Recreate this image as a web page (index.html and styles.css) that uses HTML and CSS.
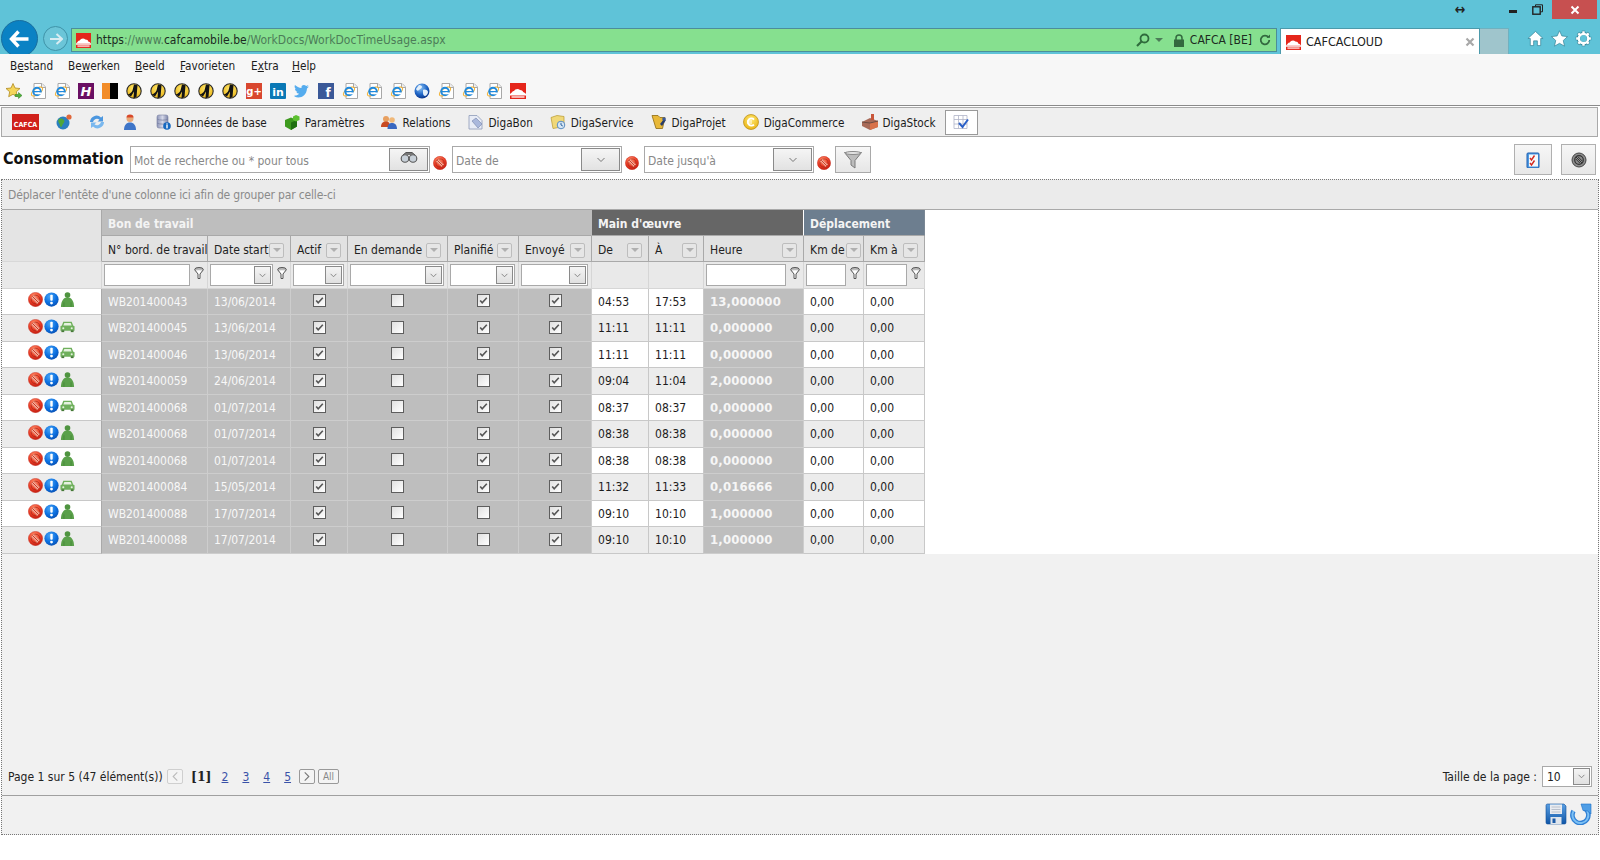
FILE: index.html
```html
<!DOCTYPE html>
<html lang="fr">
<head>
<meta charset="utf-8">
<title>CAFCACLOUD</title>
<link rel="stylesheet" href="styles.css">
</head>
<body>
<svg class="defs" width="0" height="0" aria-hidden="true">
  <defs>
    <radialGradient id="gRed" cx="40%" cy="25%" r="80%"><stop offset="0" stop-color="#ff8a66"/><stop offset=".55" stop-color="#ea3d26"/><stop offset="1" stop-color="#c01c10"/></radialGradient>
    <radialGradient id="gBlue" cx="40%" cy="30%" r="75%"><stop offset="0" stop-color="#4aa6f5"/><stop offset=".6" stop-color="#0b6fe0"/><stop offset="1" stop-color="#0a4fb0"/></radialGradient>
    <radialGradient id="gYel" cx="50%" cy="35%" r="70%"><stop offset="0" stop-color="#ffe970"/><stop offset="1" stop-color="#e8b010"/></radialGradient>
    <radialGradient id="gGlobe" cx="40%" cy="30%" r="75%"><stop offset="0" stop-color="#8cc4f5"/><stop offset=".6" stop-color="#1c62c4"/><stop offset="1" stop-color="#0b2f80"/></radialGradient>
    <linearGradient id="gDisk" x1="0" y1="0" x2="0" y2="1"><stop offset="0" stop-color="#5a9fe2"/><stop offset="1" stop-color="#0f56a8"/></linearGradient>
    <linearGradient id="gDb" x1="0" y1="0" x2="1" y2="0"><stop offset="0" stop-color="#8d95b8"/><stop offset=".5" stop-color="#d5d8e8"/><stop offset="1" stop-color="#7c84a8"/></linearGradient>
    <symbol id="stop" viewBox="0 0 16 16"><circle cx="8" cy="8" r="7.600" fill="url(#gRed)" stroke="#c62a1c" stroke-width=".5"/><circle cx="8" cy="8" r="4.600" fill="none" stroke="#a8281a" stroke-width=".8"/><path d="M4.800 4.800l6.400 6.400" stroke="#f6ad98" stroke-width="4.200"/><path d="M4.800 4.800l6.400 6.400" stroke="#c4301e" stroke-width="1"/><path d="M6.300 3.800l5.900 5.900M3.800 6.300l5.900 5.900" stroke="#d8503c" stroke-width=".6"/></symbol>
    <symbol id="info" viewBox="0 0 16 16"><circle cx="8" cy="8" r="7.600" fill="url(#gBlue)"/><rect x="6.700" y="2.800" width="2.600" height="6.400" rx="1" fill="#fff"/><circle cx="8" cy="11.800" r="1.500" fill="#fff"/></symbol>
    <symbol id="person" viewBox="0 0 16 16"><circle cx="8" cy="3.300" r="3" fill="#4f9440"/><path d="M5.500 6h5c2.500 1 4.500 5 4.500 10H1C1 11 3 7 5.500 6z" fill="#5aa04a"/><path d="M4.200 11v5M11.800 11v5" stroke="#3f7e32" stroke-width=".7"/></symbol>
    <symbol id="car" viewBox="0 0 16 16"><path d="M3.500 3h9l1.500 4 1.500 .8v4.700h-15V7.800L2 7z" fill="#6fb05c"/><path d="M4.600 4.300h6.800l1 2.700H3.600z" fill="#e6f2e0"/><rect x="1.500" y="12" width="3" height="2" fill="#467a38"/><rect x="11.500" y="12" width="3" height="2" fill="#467a38"/><circle cx="3.500" cy="9.800" r="1.100" fill="#e6f2e0"/><circle cx="12.500" cy="9.800" r="1.100" fill="#e6f2e0"/></symbol>
    <symbol id="tick" viewBox="0 0 11 11"><path d="M2.200 5.500l2 2.300L8.800 2.800" fill="none" stroke="#555" stroke-width="1.600"/></symbol>
    <symbol id="funnel" viewBox="0 0 10 12"><ellipse cx="5" cy="2.500" rx="4.300" ry="2" fill="#bbb" stroke="#555"/><path d="M1 3.200L4 7v4.500h2V7l3-3.800" fill="#fff" stroke="#555"/></symbol>
    <symbol id="chev" viewBox="0 0 10 6"><path d="M1.500 1l3.500 3.500L8.500 1" fill="none" stroke="#777" stroke-width="1"/></symbol>
    <symbol id="favi" viewBox="0 0 16 16"><rect width="16" height="16" fill="#e5261b"/><path d="M0 11c2-1 2-3 4-3 1-2 4-3 6-1 2 0 3 1 3 2 1 0 2 1 3 2z" fill="#fff"/><rect y="11" width="16" height="1.500" fill="#fff"/><path d="M1.500 13h13v2h-13z" fill="#f7b5b0"/></symbol>
    <symbol id="iedoc" viewBox="0 0 16 16"><path d="M4 .5h8l3.500 3.500v11.500H4z" fill="#fff" stroke="#a8a8a8"/><path d="M11.500 .5v4h4" fill="#eee" stroke="#a8a8a8"/><ellipse cx="7" cy="8.500" rx="6.500" ry="3" fill="none" stroke="#f2b233" stroke-width="1.100" transform="rotate(-35 7 8.500)"/><circle cx="7" cy="8.500" r="3.800" fill="none" stroke="#1f8ae0" stroke-width="1.900"/><rect x="4" y="8" width="6" height="1.300" fill="#1f8ae0"/><rect x="7.400" y="9.500" width="4.300" height="1.800" fill="#fff"/></symbol>
    <symbol id="yel" viewBox="0 0 16 16"><circle cx="8" cy="8" r="7.200" fill="url(#gYel)" stroke="#2a2a2a" stroke-width="1.100"/><path d="M1.500 11.500C4 11 5.500 9.500 6.500 7.500L8 1.500l3.500 .8L10.500 14l-3 1.500 .5-7-3 5z" fill="#141414"/></symbol>
    <symbol id="globe" viewBox="0 0 16 16"><circle cx="8" cy="8" r="7.500" fill="url(#gGlobe)"/><path d="M5 2c2 0 3 1 3 2S6 6 5 7 3 8 2 6zM9 7c2-1 5 0 5 2s-2 4-3 4-2-1-2-3z" fill="#e4f0fb"/></symbol>
    <symbol id="home" viewBox="0 0 18 18"><path d="M9 1.500L17 9h-2.500v7.500H11v-5H7v5H3.500V9H1z" fill="#fff" stroke="#2f7e92" stroke-width=".7"/></symbol>
    <symbol id="star" viewBox="0 0 18 18"><path d="M9 .8l2.500 5.500 6 .7-4.500 4.100 1.300 6L9 14.100l-5.300 3 1.300-6L.5 7l6-.7z" fill="#fff" stroke="#2f7e92" stroke-width=".7"/></symbol>
    <symbol id="gear" viewBox="0 0 18 18"><path d="M9 3.800v-3M9 14.200v3M3.800 9h-3M14.200 9h3M5.300 5.300L3.200 3.200M12.700 12.700l2.100 2.100M5.300 12.700l-2.100 2.100M12.700 5.300l2.100-2.100" stroke="#2f7e92" stroke-width="3.600"/><circle cx="9" cy="9" r="5.300" fill="none" stroke="#2f7e92" stroke-width="3.400"/><path d="M9 3.800v-2.600M9 14.200v2.600M3.800 9H1.200M14.200 9h2.600M5.300 5.300L3.500 3.500M12.700 12.700l1.800 1.800M5.300 12.700l-1.800 1.800M12.700 5.300l1.800-1.800" stroke="#fff" stroke-width="2.600"/><circle cx="9" cy="9" r="5" fill="none" stroke="#fff" stroke-width="2.400"/></symbol>
  </defs>
</svg>

<header class="chrome">
  <div class="caption">
    <span class="resize">↔</span>
    <span class="winmin"></span>
    <svg class="winmax" viewBox="0 0 11 11"><path d="M3.500 2.500V.8h7v7H8.500" fill="none" stroke="#222"/><rect x=".8" y="2.800" width="7.400" height="7.400" fill="none" stroke="#222" stroke-width="1.400"/></svg>
    <span class="winclose"><svg class="closex" viewBox="0 0 10 10"><path d="M1.500 1.500l7 7M8.500 1.500l-7 7" stroke="#fff" stroke-width="2"/></svg></span>
  </div>
  <div class="navrow">
    <span class="back"><svg class="back-arrow" viewBox="0 0 20 18"><path d="M9 1.500L2 9l7 7.500M2.500 9H19" fill="none" stroke="#fff" stroke-width="3.400"/></svg></span>
    <span class="forward"><svg class="fwd-arrow" viewBox="0 0 14 12"><path d="M7.500 1L13 6l-5.500 5M12.500 6H1" fill="none" stroke="#d8ecf2" stroke-width="2"/></svg></span>
    <div class="address">
      <svg class="fav15"><use href="#favi"/></svg>
      <span class="url">https<span class="dim">://www.</span>cafcamobile.be<span class="dim">/WorkDocs/WorkDocTimeUsage.aspx</span></span>
      <span class="grow"></span>
      <svg class="addr-search" viewBox="0 0 14 14"><circle cx="8.500" cy="5.500" r="4" fill="none" stroke="#2f6b3c" stroke-width="1.800"/><path d="M5.500 8.500L1 13" stroke="#2f6b3c" stroke-width="2.200"/></svg>
      <span class="addr-caret"></span>
      <svg class="addr-lock" viewBox="0 0 12 13"><path d="M3 6V4a3 3 0 0 1 6 0v2" fill="none" stroke="#33693f" stroke-width="1.500"/><rect x="1" y="5.500" width="10" height="7.500" fill="#33693f"/></svg>
      <span class="cert">CAFCA [BE]</span>
      <svg class="addr-reload" viewBox="0 0 12 12"><path d="M9.500 3.500A4.300 4.300 0 1 0 10.300 6" fill="none" stroke="#33693f" stroke-width="1.800"/><path d="M7.500 3.800h3.500V.5z" fill="#33693f"/></svg>
    </div>
    <div class="tab">
      <svg class="fav15"><use href="#favi"/></svg>
      <span class="tab-title">CAFCACLOUD</span>
      <span class="grow"></span>
      <svg class="tab-x" viewBox="0 0 10 10"><path d="M1.500 1.500l7 7M8.500 1.500l-7 7" stroke="#a8a8a8" stroke-width="2.200"/></svg>
    </div>
    <span class="newtab"></span>
    <div class="tools">
      <svg class="tool"><use href="#home"/></svg>
      <svg class="tool"><use href="#star"/></svg>
      <svg class="tool"><use href="#gear"/></svg>
    </div>
  </div>
</header>

<nav class="menus">
  <div class="menubar">
    <span class="m1">B<u>e</u>stand</span>
    <span class="m2">Be<u>w</u>erken</span>
    <span class="m3"><u>B</u>eeld</span>
    <span class="m4"><u>F</u>avorieten</span>
    <span class="m5">E<u>x</u>tra</span>
    <span class="m6"><u>H</u>elp</span>
  </div>
  <div class="favbar">
    <svg class="ic" viewBox="0 0 16 16"><path d="M7 .5l2 4.500 5 .5-3.700 3.300 1 4.900L7 11.300 2.700 13.700l1-4.900L0 5.500l5-.5z" fill="#f5d65a" stroke="#b08a20" stroke-width=".8"/><path d="M9 11.500h3.500V9.500l3.500 3-3.500 3v-2H9z" fill="#4fb03a" stroke="#2d7a22" stroke-width=".5"/></svg>
    <svg class="ic"><use href="#iedoc"/></svg>
    <svg class="ic"><use href="#iedoc"/></svg>
    <svg class="ic" viewBox="0 0 16 16"><rect width="16" height="16" fill="#6a0f63"/><text x="8" y="13" class="ltr-h">H</text></svg>
    <svg class="ic" viewBox="0 0 16 16"><rect width="8" height="16" fill="#f28c28"/><rect x="8" width="8" height="16" fill="#000"/></svg>
    <svg class="ic"><use href="#yel"/></svg>
    <svg class="ic"><use href="#yel"/></svg>
    <svg class="ic"><use href="#yel"/></svg>
    <svg class="ic"><use href="#yel"/></svg>
    <svg class="ic"><use href="#yel"/></svg>
    <svg class="ic" viewBox="0 0 16 16"><rect width="16" height="16" fill="#d9472f"/><text x="8" y="12" class="ltr-g">g+</text></svg>
    <svg class="ic" viewBox="0 0 16 16"><rect width="16" height="16" rx="1" fill="#0a78b5"/><text x="8" y="12.500" class="ltr-in">in</text></svg>
    <svg class="ic" viewBox="0 0 16 16"><path d="M.5 13.500c5 2.500 12 0 12.500-8l2-2-2 .5 1.500-2-2.300 1C9.800 1 7 2.500 7.500 5 5 5 2.500 3.500 1 2c-.8 1.500-.3 3 1 4L1 5.700c0 1.500 1 2.600 2.500 3l-1.200.1c.5 1.200 1.500 2 2.800 2-1.300 1.300-3 2-4.600 1.700z" fill="#55acee"/></svg>
    <svg class="ic" viewBox="0 0 16 16"><rect width="16" height="16" fill="#3b5998"/><text x="10" y="14" class="ltr-f">f</text></svg>
    <svg class="ic"><use href="#iedoc"/></svg>
    <svg class="ic"><use href="#iedoc"/></svg>
    <svg class="ic"><use href="#iedoc"/></svg>
    <svg class="ic"><use href="#globe"/></svg>
    <svg class="ic"><use href="#iedoc"/></svg>
    <svg class="ic"><use href="#iedoc"/></svg>
    <svg class="ic"><use href="#iedoc"/></svg>
    <svg class="ic"><use href="#favi"/></svg>
  </div>
</nav>

<div class="toolbar">
  <span class="logo">CAFCA</span>
  <svg class="ic" viewBox="0 0 16 16"><circle cx="7" cy="9" r="6.500" fill="#2a7fc0"/><path d="M3 5c2-1 4 0 5 1s0 3-1 4-1 3-2 3-1-3-2-4-1-3 0-4z" fill="#4ea63a"/><circle cx="13" cy="3" r="2.600" fill="#e0673a"/></svg>
  <svg class="ic" viewBox="0 0 16 16"><path d="M1 8a6.500 6.500 0 0 1 11-4.500l2-1.500v5.500H8.500l2-1.800A4 4 0 0 0 4 8z" fill="#4c97df"/><path d="M15 8a6.500 6.500 0 0 1-11 4.500L2 14V8.500h5.500l-2 1.800A4 4 0 0 0 12 8z" fill="#7ab8ee"/></svg>
  <svg class="ic" viewBox="0 0 16 16"><circle cx="8" cy="4.500" r="3.500" fill="#e8a878"/><path d="M4.500 3.500a3.500 3 0 0 1 7 0z" fill="#d8482a"/><path d="M2 16c0-5 2.500-7.500 6-7.500s6 2.500 6 7.500z" fill="#3f75c8"/></svg>
  <span class="tb"><svg class="ic" viewBox="0 0 16 16"><rect x="2" y="1" width="11" height="13" rx="2" fill="url(#gDb)" stroke="#767ea0" stroke-width=".6"/><path d="M2 5c2 1.500 9 1.500 11 0M2 9c2 1.500 9 1.500 11 0" fill="none" stroke="#767ea0" stroke-width=".7"/><circle cx="12" cy="12" r="3.800" fill="#1668c0"/><rect x="11.300" y="11" width="1.400" height="3.400" fill="#fff"/><rect x="11.300" y="9.400" width="1.400" height="1.200" fill="#fff"/></svg><span class="tbt">Données de base</span></span>
  <span class="tb"><svg class="ic" viewBox="0 0 16 16"><path d="M1 6l6-2.500 6 2.500v6.500L7 16l-6-3.500z" fill="#3d9a1e"/><path d="M7 8.500V16l6-3.500V6z" fill="#1f6f10"/><path d="M9 2.500L12 1l3.500 1.500v3.500L12 7.500 9 6z" fill="#5cc030"/></svg><span class="tbt">Paramètres</span></span>
  <span class="tb"><svg class="ic" viewBox="0 0 16 16"><circle cx="5" cy="5" r="3" fill="#e8a060"/><path d="M0 13c0-4 2-5.500 5-5.500s4 1.500 4 5.500z" fill="#c84a22"/><circle cx="11" cy="6" r="2.800" fill="#f0b878"/><path d="M6.500 15c0-4.500 2-6 4.500-6s5 1.500 5 6z" fill="#3a68c0"/></svg><span class="tbt">Relations</span></span>
  <span class="tb"><svg class="ic" viewBox="0 0 16 16"><path d="M1 1.500h8l5 5v8.500H1z" fill="#e8ecf6" stroke="#8e9ab8" stroke-width=".8"/><path d="M4 7l4-3 6 6-4 4z" fill="#aab8dc" stroke="#7684aa" stroke-width=".6"/></svg><span class="tbt">DigaBon</span></span>
  <span class="tb"><svg class="ic" viewBox="0 0 16 16"><path d="M1 3.500l6-2 7 1v10l-11 2z" fill="#f0d878" stroke="#b8982c" stroke-width=".7"/><circle cx="11" cy="11" r="3.800" fill="#d6e6f4" stroke="#5a8cc0"/><path d="M11 8.800V11l1.800 1" fill="none" stroke="#2c64a0"/></svg><span class="tbt">DigaService</span></span>
  <span class="tb"><svg class="ic" viewBox="0 0 16 16"><path d="M1 1.500h6l2 2h5l-2.500 11H5z" fill="#e8b838" stroke="#8e6a10" stroke-width=".8"/><path d="M9 10l4-5 2 1-4 6z" fill="#283c68"/><circle cx="13" cy="5" r="1.800" fill="#3a5a9c"/></svg><span class="tbt">DigaProjet</span></span>
  <span class="tb"><svg class="ic" viewBox="0 0 16 16"><circle cx="8" cy="8" r="7.500" fill="url(#gYel)" stroke="#b88a10" stroke-width=".7"/><path d="M11 5.500a3.600 3.600 0 1 0 0 5" fill="none" stroke="#fff" stroke-width="1.800"/><path d="M4 7h5M4 9h5" stroke="#fff"/></svg><span class="tbt">DigaCommerce</span></span>
  <span class="tb"><svg class="ic" viewBox="0 0 16 16"><path d="M0 8l8-4 8 3v6l-8 3-8-4z" fill="#a86a58"/><path d="M8 9v7l8-3V7z" fill="#d8724a"/><path d="M0 8l8 1 8-2" fill="none" stroke="#6a4a40"/><rect x="9" y="0" width="3" height="6" fill="#c8563a"/></svg><span class="tbt">DigaStock</span></span>
  <span class="tb-btn"><svg class="ic" viewBox="0 0 16 16"><path d="M1 1.500h13v13H1zM1 5.500h13M1 10h13M5.500 1.500v13M10 1.500v13" fill="#fff" stroke="#b0b4c8" stroke-width=".8"/><path d="M6 9l3.500 4L15 5.500" fill="none" stroke="#2a60c8" stroke-width="2"/></svg></span>
</div>

<div class="headrow">
  <span class="title">Consommation</span>
  <div class="field f-search">
    <span class="ph">Mot de recherche ou * pour tous</span>
    <span class="fbtn bino"><svg class="bino-ic" viewBox="0 0 18 11"><circle cx="5" cy="6.500" r="3.800" fill="#c8d0d8" stroke="#555" stroke-width="1.100"/><circle cx="13" cy="6.500" r="3.800" fill="#c8d0d8" stroke="#555" stroke-width="1.100"/><path d="M3 3l3-2.500h6L15 3" fill="#777" stroke="#555"/></svg></span>
  </div>
  <svg class="stop-h"><use href="#stop"/></svg>
  <div class="field f-date">
    <span class="ph">Date de</span>
    <span class="fbtn"><svg class="chev-m"><use href="#chev"/></svg></span>
  </div>
  <svg class="stop-h"><use href="#stop"/></svg>
  <div class="field f-date2">
    <span class="ph">Date jusqu'à</span>
    <span class="fbtn"><svg class="chev-m"><use href="#chev"/></svg></span>
  </div>
  <svg class="stop-h"><use href="#stop"/></svg>
  <span class="filterbtn"><svg class="funnel-l" viewBox="0 0 18 18"><path d="M.5 1.500h17L11 9.500V17l-4-3V9.500z" fill="#bcbcbc" stroke="#7a7a7a"/><ellipse cx="9" cy="2" rx="8" ry="1.500" fill="#e4e4e4" stroke="#8a8a8a"/></svg></span>
  <span class="grow"></span>
  <span class="sidebtn sb1"><svg class="ic" viewBox="0 0 16 16"><rect x="2" y="1" width="12" height="15" rx="1" fill="#4f9be2" stroke="#1f5fb0"/><rect x="4" y="2.500" width="9" height="12" fill="#f4f8fc"/><path d="M5 6l1.500 2L9.500 3.500M5 11l1.500 2 3-4.500" fill="none" stroke="#d42a20" stroke-width="1.400"/></svg></span>
  <span class="sidebtn sb2"><svg class="ic" viewBox="0 0 16 16"><circle cx="8" cy="8" r="7" fill="#8c8c8c" stroke="#444"/><circle cx="8" cy="8" r="4.300" fill="none" stroke="#333" stroke-width="1.200"/><path d="M5 5l6 6M6.800 4.600l4.600 4.600M4.600 6.800l4.600 4.600" stroke="#333"/></svg></span>
</div>

<main class="grid">
  <div class="groupbar">Déplacer l'entête d'une colonne ici afin de grouper par celle-ci</div>
  <div class="tablewrap">
    <table class="tbl">
      <colgroup>
        <col class="w1"><col class="w2"><col class="w3"><col class="w4"><col class="w5"><col class="w6"><col class="w7"><col class="w8"><col class="w9"><col class="w10"><col class="w11"><col class="w12">
      </colgroup>
      <thead>
        <tr class="r-group">
          <th rowspan="2" class="corner"></th>
          <th colspan="6" class="g-bon">Bon de travail</th>
          <th colspan="3" class="g-main">Main d'œuvre</th>
          <th colspan="2" class="g-dep">Déplacement</th>
        </tr>
        <tr class="r-head">
          <th class="h nobtn">N° bord. de travail</th>
          <th class="h"><span class="hc"><span>Date start</span><i class="sb"></i></span></th>
          <th class="h"><span class="hc"><span>Actif</span><i class="sb"></i></span></th>
          <th class="h"><span class="hc"><span>En demande</span><i class="sb"></i></span></th>
          <th class="h"><span class="hc"><span>Planifié</span><i class="sb"></i></span></th>
          <th class="h"><span class="hc"><span>Envoyé</span><i class="sb"></i></span></th>
          <th class="h"><span class="hc"><span>De</span><i class="sb"></i></span></th>
          <th class="h"><span class="hc"><span>À</span><i class="sb"></i></span></th>
          <th class="h"><span class="hc"><span>Heure</span><i class="sb"></i></span></th>
          <th class="h"><span class="hc tight"><span>Km de</span><i class="sb"></i></span></th>
          <th class="h"><span class="hc"><span>Km à</span><i class="sb"></i></span></th>
        </tr>
        <tr class="r-filter">
          <td></td>
          <td><span class="fc"><span class="ti"></span><svg class="fn"><use href="#funnel"/></svg></span></td>
          <td><span class="fc"><span class="dd"><b><svg class="chev-s"><use href="#chev"/></svg></b></span><svg class="fn"><use href="#funnel"/></svg></span></td>
          <td><span class="fc"><span class="dd"><b><svg class="chev-s"><use href="#chev"/></svg></b></span></span></td>
          <td><span class="fc"><span class="dd"><b><svg class="chev-s"><use href="#chev"/></svg></b></span></span></td>
          <td><span class="fc"><span class="dd"><b><svg class="chev-s"><use href="#chev"/></svg></b></span></span></td>
          <td><span class="fc"><span class="dd"><b><svg class="chev-s"><use href="#chev"/></svg></b></span></span></td>
          <td></td>
          <td></td>
          <td><span class="fc"><span class="ti"></span><svg class="fn"><use href="#funnel"/></svg></span></td>
          <td><span class="fc"><span class="ti"></span><svg class="fn"><use href="#funnel"/></svg></span></td>
          <td><span class="fc"><span class="ti"></span><svg class="fn"><use href="#funnel"/></svg></span></td>
        </tr>
      </thead>
      <tbody>
        <tr>
          <td class="act"><span class="acts"><svg class="a"><use href="#stop"/></svg><svg class="a"><use href="#info"/></svg><svg class="a"><use href="#person"/></svg></span></td>
          <td class="gr">WB201400043</td><td class="gr">13/06/2014</td>
          <td class="gr ck"><span class="cb"><svg><use href="#tick"/></svg></span></td><td class="gr ck"><span class="cb"></span></td><td class="gr ck"><span class="cb"><svg><use href="#tick"/></svg></span></td><td class="gr ck"><span class="cb"><svg><use href="#tick"/></svg></span></td>
          <td>04:53</td><td>17:53</td><td class="gr hr">13,000000</td><td>0,00</td><td>0,00</td>
        </tr>
        <tr>
          <td class="act"><span class="acts"><svg class="a"><use href="#stop"/></svg><svg class="a"><use href="#info"/></svg><svg class="a"><use href="#car"/></svg></span></td>
          <td class="gr">WB201400045</td><td class="gr">13/06/2014</td>
          <td class="gr ck"><span class="cb"><svg><use href="#tick"/></svg></span></td><td class="gr ck"><span class="cb"></span></td><td class="gr ck"><span class="cb"><svg><use href="#tick"/></svg></span></td><td class="gr ck"><span class="cb"><svg><use href="#tick"/></svg></span></td>
          <td>11:11</td><td>11:11</td><td class="gr hr">0,000000</td><td>0,00</td><td>0,00</td>
        </tr>
        <tr>
          <td class="act"><span class="acts"><svg class="a"><use href="#stop"/></svg><svg class="a"><use href="#info"/></svg><svg class="a"><use href="#car"/></svg></span></td>
          <td class="gr">WB201400046</td><td class="gr">13/06/2014</td>
          <td class="gr ck"><span class="cb"><svg><use href="#tick"/></svg></span></td><td class="gr ck"><span class="cb"></span></td><td class="gr ck"><span class="cb"><svg><use href="#tick"/></svg></span></td><td class="gr ck"><span class="cb"><svg><use href="#tick"/></svg></span></td>
          <td>11:11</td><td>11:11</td><td class="gr hr">0,000000</td><td>0,00</td><td>0,00</td>
        </tr>
        <tr>
          <td class="act"><span class="acts"><svg class="a"><use href="#stop"/></svg><svg class="a"><use href="#info"/></svg><svg class="a"><use href="#person"/></svg></span></td>
          <td class="gr">WB201400059</td><td class="gr">24/06/2014</td>
          <td class="gr ck"><span class="cb"><svg><use href="#tick"/></svg></span></td><td class="gr ck"><span class="cb"></span></td><td class="gr ck"><span class="cb"></span></td><td class="gr ck"><span class="cb"><svg><use href="#tick"/></svg></span></td>
          <td>09:04</td><td>11:04</td><td class="gr hr">2,000000</td><td>0,00</td><td>0,00</td>
        </tr>
        <tr>
          <td class="act"><span class="acts"><svg class="a"><use href="#stop"/></svg><svg class="a"><use href="#info"/></svg><svg class="a"><use href="#car"/></svg></span></td>
          <td class="gr">WB201400068</td><td class="gr">01/07/2014</td>
          <td class="gr ck"><span class="cb"><svg><use href="#tick"/></svg></span></td><td class="gr ck"><span class="cb"></span></td><td class="gr ck"><span class="cb"><svg><use href="#tick"/></svg></span></td><td class="gr ck"><span class="cb"><svg><use href="#tick"/></svg></span></td>
          <td>08:37</td><td>08:37</td><td class="gr hr">0,000000</td><td>0,00</td><td>0,00</td>
        </tr>
        <tr>
          <td class="act"><span class="acts"><svg class="a"><use href="#stop"/></svg><svg class="a"><use href="#info"/></svg><svg class="a"><use href="#person"/></svg></span></td>
          <td class="gr">WB201400068</td><td class="gr">01/07/2014</td>
          <td class="gr ck"><span class="cb"><svg><use href="#tick"/></svg></span></td><td class="gr ck"><span class="cb"></span></td><td class="gr ck"><span class="cb"><svg><use href="#tick"/></svg></span></td><td class="gr ck"><span class="cb"><svg><use href="#tick"/></svg></span></td>
          <td>08:38</td><td>08:38</td><td class="gr hr">0,000000</td><td>0,00</td><td>0,00</td>
        </tr>
        <tr>
          <td class="act"><span class="acts"><svg class="a"><use href="#stop"/></svg><svg class="a"><use href="#info"/></svg><svg class="a"><use href="#person"/></svg></span></td>
          <td class="gr">WB201400068</td><td class="gr">01/07/2014</td>
          <td class="gr ck"><span class="cb"><svg><use href="#tick"/></svg></span></td><td class="gr ck"><span class="cb"></span></td><td class="gr ck"><span class="cb"><svg><use href="#tick"/></svg></span></td><td class="gr ck"><span class="cb"><svg><use href="#tick"/></svg></span></td>
          <td>08:38</td><td>08:38</td><td class="gr hr">0,000000</td><td>0,00</td><td>0,00</td>
        </tr>
        <tr>
          <td class="act"><span class="acts"><svg class="a"><use href="#stop"/></svg><svg class="a"><use href="#info"/></svg><svg class="a"><use href="#car"/></svg></span></td>
          <td class="gr">WB201400084</td><td class="gr">15/05/2014</td>
          <td class="gr ck"><span class="cb"><svg><use href="#tick"/></svg></span></td><td class="gr ck"><span class="cb"></span></td><td class="gr ck"><span class="cb"><svg><use href="#tick"/></svg></span></td><td class="gr ck"><span class="cb"><svg><use href="#tick"/></svg></span></td>
          <td>11:32</td><td>11:33</td><td class="gr hr">0,016666</td><td>0,00</td><td>0,00</td>
        </tr>
        <tr>
          <td class="act"><span class="acts"><svg class="a"><use href="#stop"/></svg><svg class="a"><use href="#info"/></svg><svg class="a"><use href="#person"/></svg></span></td>
          <td class="gr">WB201400088</td><td class="gr">17/07/2014</td>
          <td class="gr ck"><span class="cb"><svg><use href="#tick"/></svg></span></td><td class="gr ck"><span class="cb"></span></td><td class="gr ck"><span class="cb"></span></td><td class="gr ck"><span class="cb"><svg><use href="#tick"/></svg></span></td>
          <td>09:10</td><td>10:10</td><td class="gr hr">1,000000</td><td>0,00</td><td>0,00</td>
        </tr>
        <tr>
          <td class="act"><span class="acts"><svg class="a"><use href="#stop"/></svg><svg class="a"><use href="#info"/></svg><svg class="a"><use href="#person"/></svg></span></td>
          <td class="gr">WB201400088</td><td class="gr">17/07/2014</td>
          <td class="gr ck"><span class="cb"><svg><use href="#tick"/></svg></span></td><td class="gr ck"><span class="cb"></span></td><td class="gr ck"><span class="cb"></span></td><td class="gr ck"><span class="cb"><svg><use href="#tick"/></svg></span></td>
          <td>09:10</td><td>10:10</td><td class="gr hr">1,000000</td><td>0,00</td><td>0,00</td>
        </tr>
      </tbody>
    </table>
  </div>
  <div class="spacer"></div>
  <div class="pager">
    <span class="p-info">Page 1 sur 5 (47 élément(s))</span>
    <span class="pb dis"><svg viewBox="0 0 8 12"><path d="M6.500 1.500L2 6l4.500 4.500" fill="none" stroke="#bbb" stroke-width="1.200"/></svg></span>
    <b class="cur">[1]</b>
    <a class="pl p2">2</a><a class="pl">3</a><a class="pl">4</a><a class="pl">5</a>
    <span class="pb nx"><svg viewBox="0 0 8 12"><path d="M1.500 1.500L6 6l-4.500 4.500" fill="none" stroke="#777" stroke-width="1.200"/></svg></span>
    <span class="pb all">All</span>
    <span class="grow"></span>
    <span class="p-size">Taille de la page :</span>
    <span class="psel"><span class="psel-v">10</span><b><svg class="chev-s"><use href="#chev"/></svg></b></span>
  </div>
  <div class="savebar">
    <svg class="save" viewBox="0 0 22 22"><path d="M1 2.500A1.500 1.500 0 0 1 2.500 1H19l2 2v16.500a1.500 1.500 0 0 1-1.500 1.500h-17A1.500 1.500 0 0 1 1 19.500z" fill="url(#gDisk)" stroke="#0f4d98" stroke-width=".6"/><rect x="5" y="1.500" width="12" height="9.500" fill="#e8ebf0"/><path d="M6.500 4h9M6.500 6.500h9M6.500 9h9" stroke="#b8c0cc"/><rect x="5.500" y="14" width="11" height="7" fill="#dfe5ec"/><rect x="7.500" y="15.500" width="3" height="4.500" fill="#1b5ba8"/></svg>
    <svg class="save" viewBox="0 0 22 22"><path d="M15 5.500A8 8 0 1 1 3.500 8" fill="none" stroke="#2f7fd4" stroke-width="4.600"/><path d="M15 5.500A8 8 0 1 1 3.500 8" fill="none" stroke="#7cc0f4" stroke-width="2"/><path d="M11 1h10v10l-3.500-3-4.500-.5z" fill="#4f9ee6" stroke="#1b6ec8" stroke-width=".6"/></svg>
  </div>
</main>
</body>
</html>
```

FILE: styles.css
```css
* { box-sizing: border-box; }
html, body { margin: 0; padding: 0; }
body {
  width: 1600px; height: 860px; overflow: hidden; background: #fff; color: #1c1c1c;
  font-family: "DejaVu Sans Condensed", "DejaVu Sans", sans-serif; font-size: 12px; line-height: 14px;
}
.defs { display: block; height: 0; }
.ic { width: 16px; height: 16px; display: block; flex: none; }
.fav15 { width: 15px; height: 15px; display: block; flex: none; }
.grow { flex: 1; }

/* browser chrome */
.chrome { height: 54px; background: #5fc3d8; overflow: hidden; }
.caption { height: 20px; display: flex; align-items: flex-start; padding-right: 3px; }
.resize { margin-left: auto; width: 16px; text-align: center; font-size: 14px; line-height: 18px; color: #222; font-weight: bold; }
.winmin { width: 8px; height: 3px; background: #222; margin: 10px 0 0 41px; }
.winmax { width: 11px; height: 11px; margin: 4px 0 0 15px; display: block; }
.winclose { width: 45px; height: 19px; background: #c75050; margin-left: 9px; display: flex; align-items: center; justify-content: center; }
.closex { width: 10px; height: 10px; }
.navrow { height: 34px; display: flex; align-items: flex-start; padding: 7px 0 0 1px; }
.back { width: 37px; height: 37px; margin-top: -7px; border-radius: 50%; background: #0a82c4; display: flex; align-items: center; justify-content: center; flex: none; border: 1px solid #1a6e9e; }
.back-arrow { width: 21px; height: 18px; }
.forward { width: 25px; height: 25px; margin: -1px 3px 0 5px; border-radius: 50%; border: 1px solid #3f93a8; background: #6bc5d8; display: flex; align-items: center; justify-content: center; flex: none; }
.fwd-arrow { width: 14px; height: 12px; }
.address { width: 1206px; height: 24px; margin-top: 1px; display: flex; align-items: center; background: #86e08f; border: 1px solid #4c8e9a; padding: 0 5px 0 4px; color: #1c2b1f; }
.url { margin-left: 5px; letter-spacing: .03px; }
.dim { color: #4c7c58; }
.addr-search { width: 14px; height: 14px; }
.addr-caret { width: 0; height: 0; border: 4px solid transparent; border-top-color: #4c7c58; border-bottom-width: 0; margin: 0 10px 0 5px; }
.addr-lock { width: 12px; height: 13px; }
.cert { margin: 0 7px 0 5px; }
.addr-reload { width: 12px; height: 12px; }
.tab { width: 200px; height: 27px; margin: 1px 0 0 3px; background: #fff; border: 1px solid #4c9aab; border-bottom: 0; display: flex; align-items: center; padding: 0 4px 0 5px; flex: none; }
.tab-title { margin-left: 5px; font-size: 12.5px; color: #222; }
.tab-x { width: 10px; height: 10px; }
.newtab { width: 29px; height: 27px; margin-top: 1px; background: #9fc5cc; border: 1px solid #6fb1c0; border-width: 1px 1px 0 0; flex: none; }
.tools { display: flex; gap: 7px; margin: 3px 0 0 18px; }
.tool { width: 17px; height: 17px; display: block; }

/* menu + favourites */
.menus { height: 52px; background: #f7f7f7; border-bottom: 1px solid #8a8a8a; }
.menubar { height: 24px; display: flex; align-items: center; font-size: 11.7px; }
.menubar span { display: block; }
.m1 { margin-left: 10px; width: 58px; }
.m2 { width: 67px; }
.m3 { width: 45px; }
.m4 { width: 71px; }
.m5 { width: 41px; }
.favbar { display: flex; gap: 8px; padding: 5px 0 0 6px; }
.ltr-h { font: italic bold 13px "DejaVu Sans", sans-serif; fill: #fff; text-anchor: middle; }
.ltr-g { font: bold 10px "DejaVu Sans", sans-serif; fill: #fff; text-anchor: middle; }
.ltr-in { font: bold 11px "DejaVu Sans", sans-serif; fill: #fff; text-anchor: middle; }
.ltr-f { font: bold 12px "DejaVu Sans", sans-serif; fill: #fff; text-anchor: middle; }

/* application toolbar */
.toolbar { height: 30px; margin: 1px 2px 0 1px; background: #efefef; border: 1px solid #a9a9a9; display: flex; align-items: center; gap: 17px; padding-left: 10px; font-size: 11.65px; }
.logo { width: 27px; height: 16px; background: #d0201a; color: #fff; font-size: 7px; font-weight: bold; line-height: 9px; text-align: center; padding-top: 7px; flex: none; }
.tb { display: flex; align-items: center; gap: 5px; white-space: nowrap; }
.tbt { padding-top: 2px; }
.tb-btn { width: 33px; height: 25px; background: #fff; border: 1px solid #9a9a9a; display: flex; align-items: center; justify-content: center; margin-left: -8px; }

/* heading row */
.headrow { height: 42px; display: flex; align-items: center; padding: 3px 4px 0 3px; }
.title { width: 127px; font-size: 16px; font-weight: bold; line-height: 20px; color: #111; flex: none; margin-top: -2px; }
.field { height: 27px; border: 1px solid #a9a9a9; background: #fff; display: flex; align-items: center; padding: 0 1px 0 3px; flex: none; }
.f-search { width: 300px; }
.f-date, .f-date2 { width: 170px; }
.ph { flex: 1; color: #888; padding-top: 2px; }
.fbtn { width: 39px; height: 23px; border: 1px solid #8a8a8a; background: linear-gradient(#f5f5f5, #e2e2e2); display: flex; align-items: center; justify-content: center; }
.bino-ic { width: 18px; height: 11px; margin-top: -4px; }
.chev-m { width: 10px; height: 6px; }
.stop-h { width: 14px; height: 14px; margin: 7px 5px 0 3px; flex: none; }
.filterbtn { width: 36px; height: 27px; margin-left: -1px; border: 1px solid #a9a9a9; background: linear-gradient(#f8f8f8, #e6e6e6); display: flex; align-items: center; justify-content: center; }
.funnel-l { width: 18px; height: 18px; }
.sidebtn { width: 38px; height: 31px; border: 1px solid #b0b0b0; background: linear-gradient(#f6f6f6, #e8e8e8); display: flex; align-items: center; justify-content: center; }
.sb2 { width: 35px; margin-left: 9px; }

/* grid */
.grid { height: 656px; margin: 0 1px; border: 1px dotted #777; display: flex; flex-direction: column; background: #f1f1f1; }
.groupbar { height: 30px; flex: none; background: #ebebeb; border-bottom: 1px solid #a9a9a9; color: #8a8a8a; padding: 8px 0 0 6px; letter-spacing: -.15px; }
.tablewrap { height: 344px; flex: none; background: #fff; }
.tbl { border-collapse: separate; border-spacing: 0; table-layout: fixed; width: 923px; }
.w1 { width: 100px; } .w2 { width: 106px; } .w3 { width: 83px; } .w4 { width: 57px; } .w5 { width: 100px; } .w6 { width: 71px; }
.w7 { width: 73px; } .w8 { width: 57px; } .w9 { width: 55px; } .w10 { width: 100px; } .w11 { width: 60px; } .w12 { width: 61px; }
.tbl th, .tbl td { padding: 0 0 0 6px; border-right: 1px solid #c8c8c8; border-bottom: 1px solid #c8c8c8; font-weight: normal; text-align: left; white-space: nowrap; overflow: hidden; }
.r-group th { height: 26px; font-weight: bold; color: #f4f4f4; border-color: #bdbdbd; }
.tbl .r-group th { font-weight: bold; padding-top: 2px; }
.tbl .r-group .corner { background: #e4e4e4; border-right: 1px solid #a9a9a9; border-bottom: 1px solid #d8d8d8; padding: 0; }
.tbl .g-bon { background: #bebebe; border-right: 1px solid #bebebe; border-bottom: 1px solid #a9a9a9; }
.tbl .g-main { background: #666; border-right: 1px solid #fff; border-bottom: 1px solid #a9a9a9; }
.tbl .g-dep { background: #6d7e8f; border-right: 1px solid #7a8794; border-bottom: 1px solid #a9a9a9; }
.r-head th { height: 26px; background: #e2e2e2; }
.tbl .h { border-right: 1px solid #a9a9a9; border-bottom: 1px solid #a9a9a9; color: #222; padding-top: 3px; }
.hc { display: flex; justify-content: space-between; align-items: center; padding-right: 6px; }
.hc.tight { padding-right: 2px; }
.sb { width: 15px; height: 15px; border: 1px solid #bdbdbd; border-radius: 2px; background: #e6e6e6; display: flex; align-items: center; justify-content: center; flex: none; }
.sb::after { content: ""; width: 0; height: 0; border: 4px solid transparent; border-top-color: #b0b0b0; border-bottom-width: 0; }
.r-filter td { height: 27px; background: #e9e9e9; padding: 0 0 0 2px; border-color: #d6d6d6; }
.fc { display: flex; align-items: center; padding-right: 3px; gap: 4px; }
.ti { flex: 1; min-width: 0; height: 22px; background: #fff; border: 1px solid #a9a9a9; display: block; }
.dd { flex: 1; min-width: 0; height: 22px; background: #fff; border: 1px solid #a9a9a9; display: flex; justify-content: flex-end; align-items: stretch; padding: 1px; }
.dd b, .psel b { width: 17px; border: 1px solid #8a8a8a; background: linear-gradient(#f4f4f4, #e0e0e0); display: flex; align-items: center; justify-content: center; }
.chev-s { width: 9px; height: 5px; display: block; }
.fn { width: 10px; height: 12px; margin-top: -4px; flex: none; }
tbody tr td { height: 27px; background: #fff; border-color: #d0d0d0; }
tbody tr:nth-child(odd) td { height: 26px; }
tbody tr:nth-child(even) td { background: #ececec; }
.tbl tbody td.gr { background: #bebebe; color: #f8f8f8; border-color: #cdcdcd; letter-spacing: -.05px; }
.tbl tbody td.hr { font-weight: bold; font-size: 13px; color: #f6f6f6; letter-spacing: .15px; }
.tbl td.ck { padding: 0; text-align: center; }
.cb { display: inline-block; width: 13px; height: 13px; border: 1px solid #5e5e5e; background: linear-gradient(135deg, #e0e0e0, #fff); vertical-align: middle; margin-bottom: 2px; }
.cb svg { width: 11px; height: 11px; display: block; }
.tbl td.act { padding: 0; border-right: 1px solid #a9a9a9; }
.acts { display: flex; justify-content: center; gap: 1px; margin-top: -4px; }
.a { width: 15px; height: 15px; display: block; flex: none; }

/* pager */
.spacer { flex: 1; }
.pager { height: 40px; flex: none; border-bottom: 1px solid #a0a0a0; display: flex; align-items: center; padding: 2px 6px 0 6px; color: #222; }
.p-info { width: 159px; }
.pb { width: 16px; height: 15px; border: 1px solid #999; border-radius: 2px; display: flex; align-items: center; justify-content: center; background: #f4f4f4; }
.pb svg { width: 8px; height: 11px; }
.dis { border-color: #cfcfcf; }
.cur { margin: 0 10px 0 8px; font-size: 12.5px; font-family: "DejaVu Serif", serif; }
.pl { color: #3a52a8; text-decoration: underline; margin-right: 14px; }
.nx { margin-left: -6px; }
.all { width: 21px; margin-left: 3px; color: #888; font-size: 10px; }
.p-size { margin-right: 5px; }
.psel { width: 50px; height: 21px; border: 1px solid #a9a9a9; background: #fff; display: flex; align-items: stretch; padding: 1px; }
.psel-v { flex: 1; padding: 2px 0 0 3px; }
.savebar { height: 38px; flex: none; display: flex; justify-content: flex-end; align-items: center; gap: 3px; padding: 0 6px 3px 0; }
.save { width: 22px; height: 22px; display: block; }
```
